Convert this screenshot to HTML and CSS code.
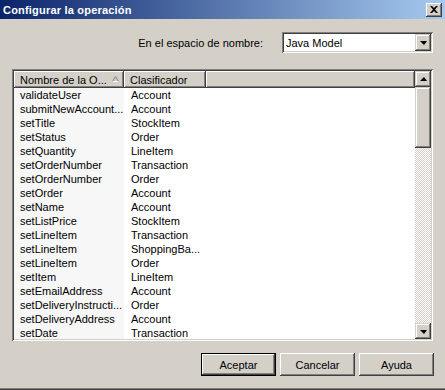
FILE: index.html
```html
<!DOCTYPE html>
<html>
<head>
<meta charset="utf-8">
<link rel="stylesheet" href="styles.css">
</head>
<body>
<div class="dialog">
  <div class="titlebar">
    <span class="title">Configurar la operación</span>
    <span class="close"><svg width="8" height="7" viewBox="0 0 8 7"><path d="M0 0h2l2 2 2-2h2L5 3.5 8 7H6L4 5 2 7H0l3-3.5z" fill="#000"/></svg></span>
  </div>
  <div class="ns-row">
    <span class="ns-label">En el espacio de nombre:</span>
    <div class="combo">
      <span class="combo-text">Java Model</span>
      <span class="sbtn combo-btn"><span class="arrow-down"></span></span>
    </div>
  </div>
  <div class="list">
    <div class="cols">
      <div class="header">
        <div class="hcell h1">Nombre de la O...<span class="sort"><svg width="7" height="6" viewBox="0 0 7 6"><path d="M3.5 0.5L6.5 5.5H0.5Z" fill="none" stroke="#808080" stroke-width="1"/><path d="M6.5 5.5H0.5" stroke="#fff"/></svg></span></div>
        <div class="hcell h2">Clasificador</div>
        <div class="hcell h3"></div>
      </div>
      <div class="rows">
        <div class="row"><span class="c1">validateUser</span><span class="c2">Account</span></div>
        <div class="row"><span class="c1">submitNewAccount...</span><span class="c2">Account</span></div>
        <div class="row"><span class="c1">setTitle</span><span class="c2">StockItem</span></div>
        <div class="row"><span class="c1">setStatus</span><span class="c2">Order</span></div>
        <div class="row"><span class="c1">setQuantity</span><span class="c2">LineItem</span></div>
        <div class="row"><span class="c1">setOrderNumber</span><span class="c2">Transaction</span></div>
        <div class="row"><span class="c1">setOrderNumber</span><span class="c2">Order</span></div>
        <div class="row"><span class="c1">setOrder</span><span class="c2">Account</span></div>
        <div class="row"><span class="c1">setName</span><span class="c2">Account</span></div>
        <div class="row"><span class="c1">setListPrice</span><span class="c2">StockItem</span></div>
        <div class="row"><span class="c1">setLineItem</span><span class="c2">Transaction</span></div>
        <div class="row"><span class="c1">setLineItem</span><span class="c2">ShoppingBa...</span></div>
        <div class="row"><span class="c1">setLineItem</span><span class="c2">Order</span></div>
        <div class="row"><span class="c1">setItem</span><span class="c2">LineItem</span></div>
        <div class="row"><span class="c1">setEmailAddress</span><span class="c2">Account</span></div>
        <div class="row"><span class="c1">setDeliveryInstructi...</span><span class="c2">Order</span></div>
        <div class="row"><span class="c1">setDeliveryAddress</span><span class="c2">Account</span></div>
        <div class="row"><span class="c1">setDate</span><span class="c2">Transaction</span></div>
      </div>
    </div>
    <div class="scrollbar">
      <span class="sbtn"><span class="arrow-up"></span></span>
      <span class="thumb"></span>
      <span class="track"></span>
      <span class="sbtn"><span class="arrow-down"></span></span>
    </div>
  </div>
  <div class="buttons">
    <span class="btn default"><span class="btn-inner">Aceptar</span></span>
    <span class="btn"><span class="btn-inner">Cancelar</span></span>
    <span class="btn"><span class="btn-inner">Ayuda</span></span>
  </div>
</div>
</body>
</html>
```
FILE: styles.css
```css
* { box-sizing: border-box; }
body {
  margin: 0;
  font-family: "Liberation Sans", Arial, sans-serif;
  font-size: 11px;
  color: #000;
  background: #d4d0c8;
}
.dialog {
  width: 445px;
  height: 390px;
  background: #d4d0c8;
  display: flex;
  flex-direction: column;
  border-bottom: 1px solid #404040;
  box-shadow: inset 0 -1px 0 #808080;
}
.titlebar {
  height: 19px;
  flex: none;
  display: flex;
  align-items: center;
  justify-content: space-between;
  padding: 0 3px 0 3px;
  background: linear-gradient(to right, #0a246a, #a6caf0);
}
.title {
  color: #fff;
  font-weight: bold;
  font-size: 11px;
  letter-spacing: 0.2px;
}
.close {
  width: 16px;
  height: 14px;
  background: #d4d0c8;
  display: flex;
  align-items: center;
  justify-content: center;
  box-shadow: inset -1px -1px #404040, inset 1px 1px #fff, inset -2px -2px #808080;
  padding-bottom: 1px;
}
.ns-row {
  margin-top: 13px;
  padding-right: 12px;
  display: flex;
  justify-content: flex-end;
  align-items: center;
  gap: 19px;
}
.combo {
  width: 151px;
  height: 21px;
  background: #fff;
  display: flex;
  align-items: center;
  justify-content: space-between;
  padding: 2px;
  box-shadow: inset 1px 1px #808080, inset -1px -1px #fff, inset 2px 2px #404040, inset -2px -2px #d4d0c8;
}
.combo-text { padding-left: 2px; font-size: 11px; }
.sbtn {
  width: 16px;
  height: 16px;
  flex: none;
  background: #d4d0c8;
  display: flex;
  align-items: center;
  justify-content: center;
  box-shadow: inset -1px -1px #404040, inset 1px 1px #d4d0c8, inset -2px -2px #808080, inset 2px 2px #fff;
}
.combo-btn { height: 17px; }
.arrow-down {
  width: 0; height: 0;
  border-left: 4px solid transparent;
  border-right: 3px solid transparent;
  border-top: 4px solid #000;
  margin-top: 1px;
}
.arrow-up {
  width: 0; height: 0;
  border-left: 4px solid transparent;
  border-right: 3px solid transparent;
  border-bottom: 4px solid #000;
}
.list {
  margin: 16px 12px 0 12px;
  height: 272px;
  flex: none;
  background: #fff;
  display: flex;
  padding: 2px;
  box-shadow: inset 1px 1px #808080, inset -1px -1px #fff, inset 2px 2px #404040, inset -2px -2px #d4d0c8;
}
.cols {
  flex: 1;
  overflow: hidden;
  display: flex;
  flex-direction: column;
}
.header {
  display: flex;
  height: 17px;
  flex: none;
}
.hcell {
  height: 17px;
  background: #d4d0c8;
  display: flex;
  align-items: center;
  padding-left: 6px;
  box-shadow: inset -1px -1px #404040, inset 1px 1px #fff, inset -2px -2px #808080;
}
.h1 { width: 110px; position: relative; }
.h2 { width: 82px; }
.h3 { flex: 1; }
.sort {
  position: absolute;
  left: 98px;
  top: 5px;
  display: flex;
}
.rows { flex: 1; overflow: hidden; }
.row {
  display: flex;
  height: 14px;
  align-items: center;
}
.c1 {
  width: 110px;
  height: 14px;
  line-height: 14px;
  padding-left: 6px;
  background: #f7f7f7;
  white-space: nowrap;
}
.c2 {
  padding-left: 7px;
  white-space: nowrap;
}
.scrollbar {
  width: 16px;
  display: flex;
  flex-direction: column;
}
.thumb {
  height: 61px;
  flex: none;
  background: #d4d0c8;
  box-shadow: inset -1px -1px #404040, inset 1px 1px #d4d0c8, inset -2px -2px #808080, inset 2px 2px #fff;
}
.track {
  flex: 1;
  background: repeating-conic-gradient(#fff 0 25%, #d4d0c8 0 50%) 0 0 / 2px 2px;
}
.buttons {
  margin-top: 12px;
  padding-right: 11px;
  display: flex;
  justify-content: flex-end;
  gap: 4px;
}
.btn {
  width: 75px;
  height: 23px;
  background: #d4d0c8;
  display: flex;
  align-items: center;
  justify-content: center;
  box-shadow: inset -1px -1px #404040, inset 1px 1px #fff, inset -2px -2px #808080;
}
.btn.default {
  border: 1px solid #000;
  box-shadow: inset -1px -1px #404040, inset 1px 1px #fff, inset -2px -2px #808080;
}
.btn-inner { font-size: 11px; }
```
